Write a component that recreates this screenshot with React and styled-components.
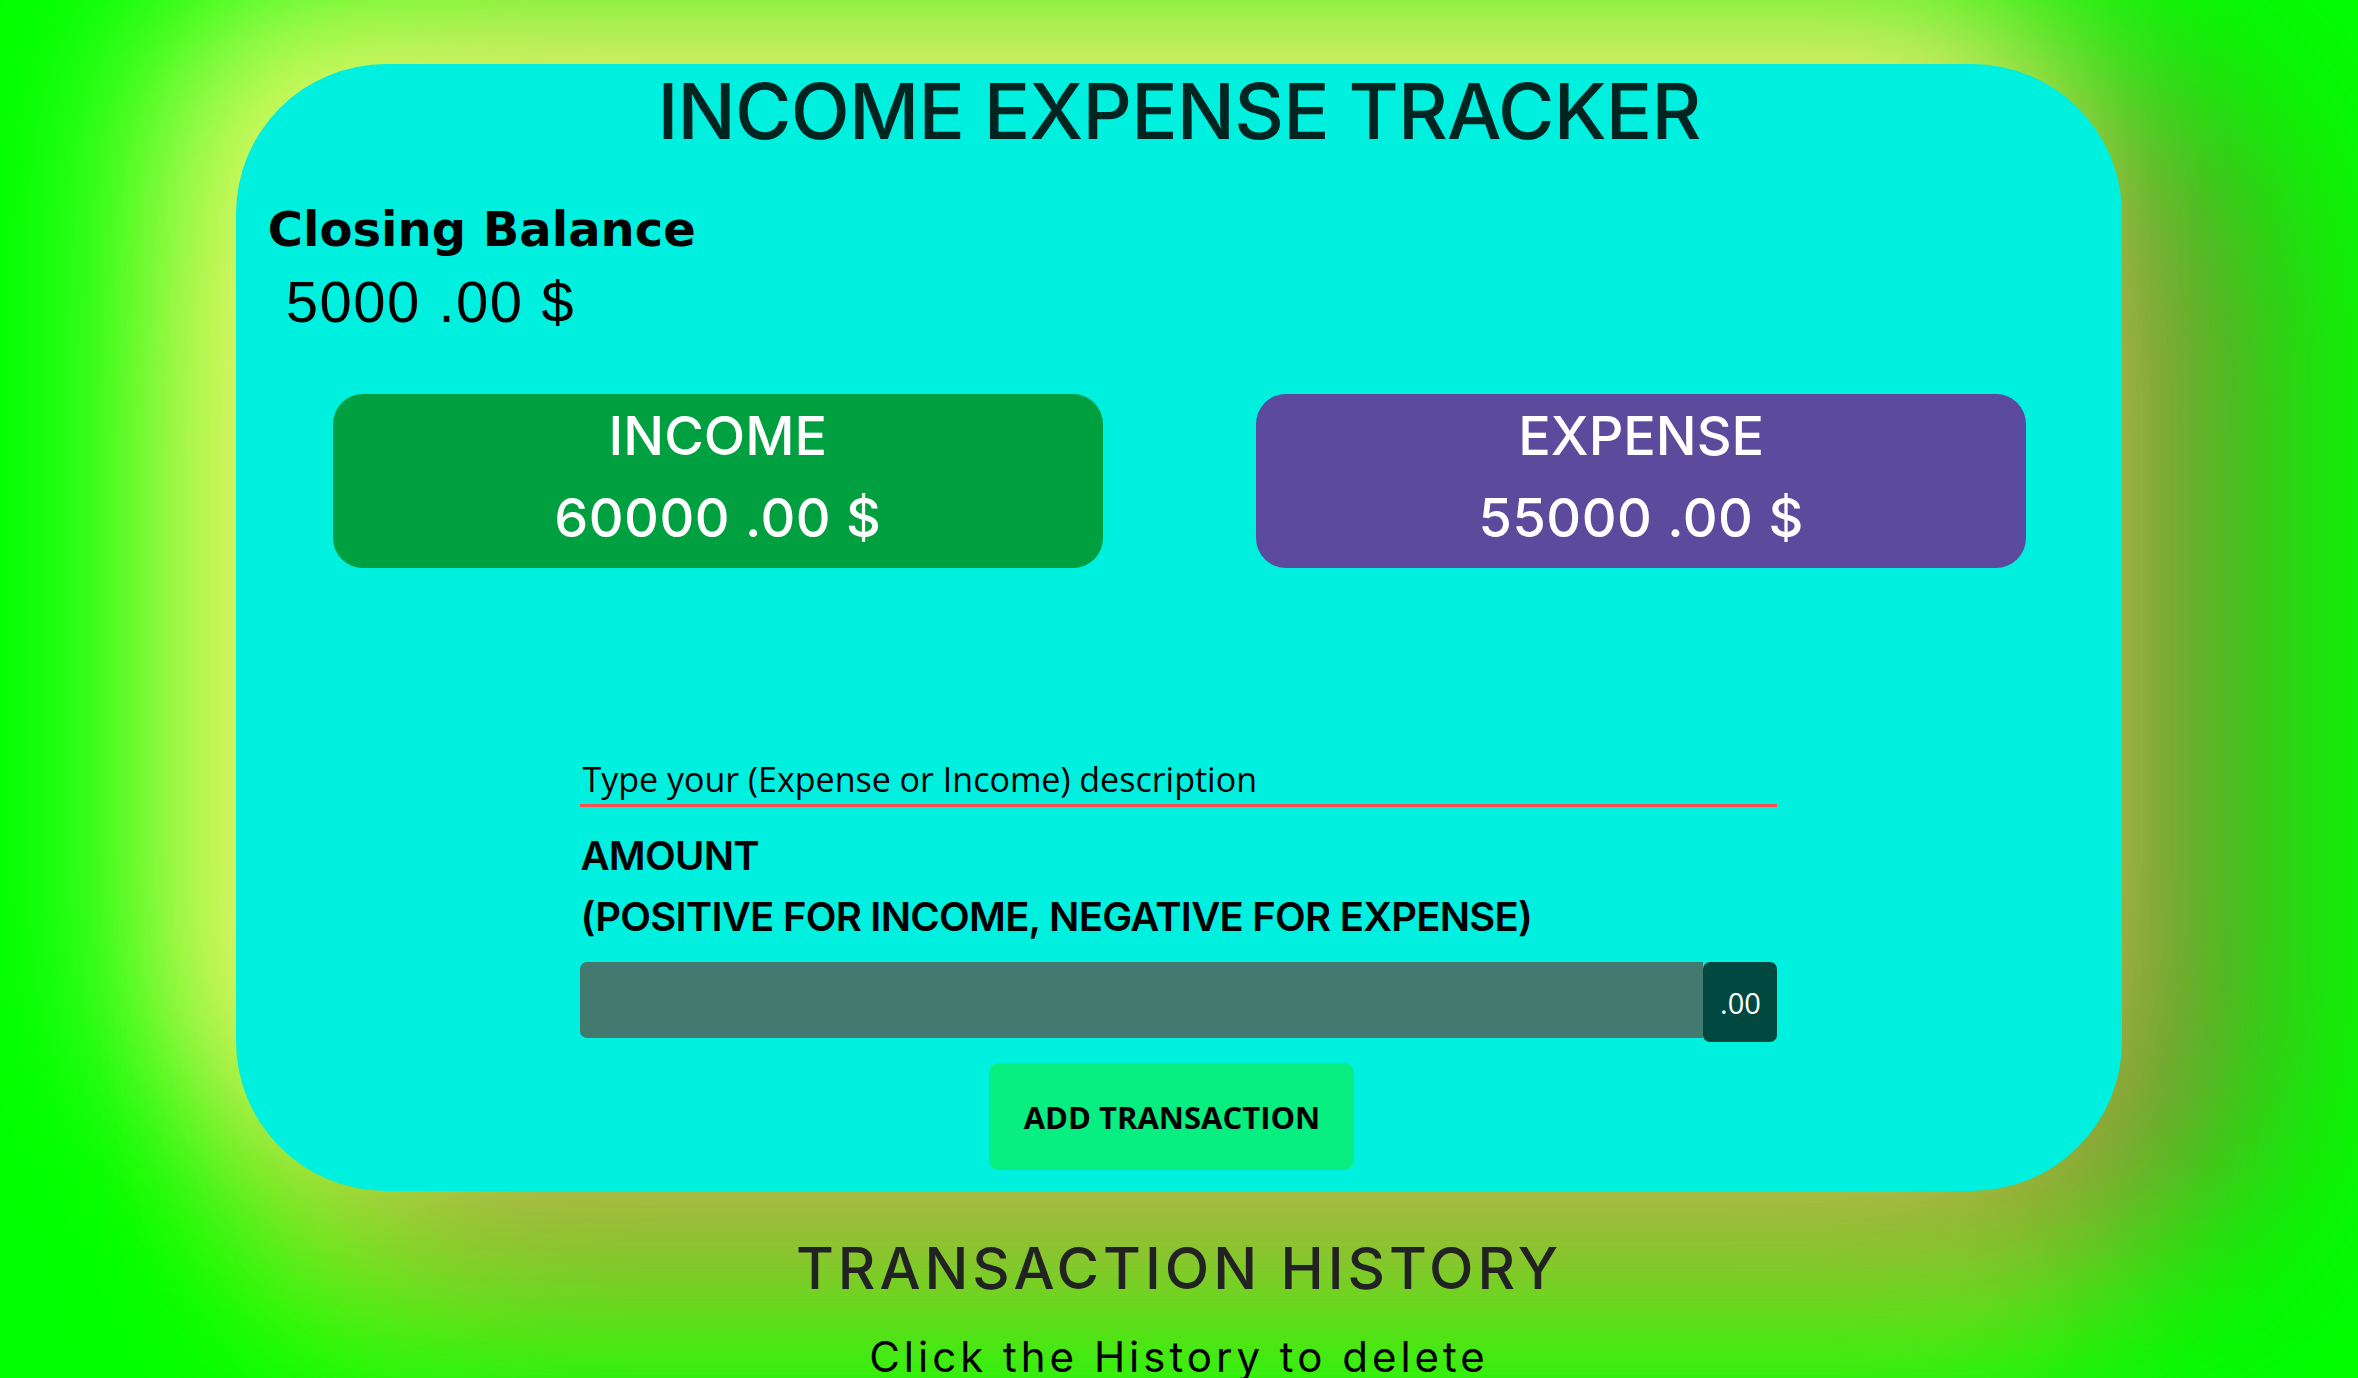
import React, { useState } from "react";
import styled, { createGlobalStyle } from "styled-components";

const GlobalStyle = createGlobalStyle`
  html, body {
    margin: 0;
    padding: 0;
  }
  body {
    background: #00ff00;
    font-family: "Inter", "Open Sans", sans-serif;
    overflow-x: hidden;
  }
`;

const Page = styled.div`
  padding-top: 64px;
  min-height: 100vh;
`;

const Card = styled.div`
  width: 80%;
  margin: 0 auto;
  background: #00f0e0;
  border-radius: 150px;
  padding-bottom: 21px;
  display: flex;
  flex-direction: column;
  box-shadow: -70px -70px 170px 20px rgba(255, 250, 120, 0.85),
    110px 40px 200px 30px rgba(150, 110, 70, 0.75),
    0px 140px 160px 10px rgba(190, 245, 40, 0.7);
`;

const Title = styled.h1`
  margin: 2px 0 0;
  text-align: center;
  font-family: "Inter", sans-serif;
  font-weight: 500;
  font-size: 77px;
  line-height: 90px;
  color: #002420;
  letter-spacing: -0.8px;
`;

const BalanceLabel = styled.h2`
  margin: 45px 0 0;
  padding-left: 32px;
  font-family: "DejaVu Sans", sans-serif;
  font-weight: 700;
  font-size: 48px;
  line-height: 56px;
  color: #000;
`;

const BalanceValue = styled.div`
  margin-top: 12px;
  padding-left: 50px;
  font-family: "Liberation Sans", Arial, sans-serif;
  font-size: 58px;
  line-height: 65px;
  letter-spacing: 1.5px;
  color: #000;
`;

const Totals = styled.div`
  display: flex;
  justify-content: space-between;
  padding: 0 96px 0 97px;
  margin-top: 60px;
`;

const TotalBox = styled.div`
  width: 770px;
  height: 174px;
  box-sizing: border-box;
  padding-top: 11px;
  border-radius: 30px;
  background: ${(p) => p.$bg};
  color: #fff;
  text-align: center;
  font-family: "Inter", sans-serif;
  font-weight: 500;
`;

const TotalLabel = styled.div`
  font-size: 54px;
  line-height: 62px;
`;

const TotalValue = styled.div`
  margin-top: 10px;
  font-size: 54px;
  line-height: 82px;
  letter-spacing: 0.5px;
`;

const Form = styled.form`
  width: 1197px;
  margin: 186px auto 0;
  display: flex;
  flex-direction: column;
`;

const DescInput = styled.input`
  height: 50px;
  box-sizing: content-box;
  padding: 0 2px;
  border: none;
  border-bottom: 3px solid #ff4f4f;
  background: transparent;
  outline: none;
  font-family: "Open Sans", sans-serif;
  font-size: 34px;
  color: #000;

  &::placeholder {
    color: #000;
  }
`;

const AmountLabel = styled.label`
  margin-top: 18px;
  font-family: "Inter", sans-serif;
  font-weight: 600;
  font-size: 40px;
  line-height: 61px;
  letter-spacing: -0.75px;
  color: #000;
`;

const AmountRow = styled.div`
  display: flex;
  align-items: flex-start;
  margin-top: 15px;
`;

const AmountInput = styled.input`
  flex: 1;
  height: 76px;
  box-sizing: border-box;
  border: none;
  border-radius: 7px 0 0 7px;
  background: #427a70;
  outline: none;
  padding: 0 20px;
  font-family: "Open Sans", sans-serif;
  font-size: 30px;
  color: #fff;
`;

const Suffix = styled.span`
  width: 74px;
  height: 80px;
  display: flex;
  align-items: center;
  justify-content: center;
  border-radius: 7px;
  background: #004840;
  color: #fff;
  font-family: "Open Sans", sans-serif;
  font-size: 29px;
`;

const AddButton = styled.button`
  align-self: center;
  margin: 21px 14px 0 0;
  width: 365px;
  height: 107px;
  border: none;
  border-radius: 10px;
  background: #08ee80;
  color: #000;
  font-family: "Open Sans", sans-serif;
  font-weight: 700;
  font-size: 31px;
  cursor: pointer;
`;

const HistoryTitle = styled.h3`
  margin: 42px 0 0;
  text-align: center;
  font-family: "Inter", sans-serif;
  font-weight: 500;
  font-size: 58px;
  line-height: 70px;
  letter-spacing: 4px;
  color: #222;
`;

const HistoryHint = styled.p`
  margin: 24px 0 0;
  text-align: center;
  font-family: "Inter", sans-serif;
  font-weight: 400;
  font-size: 42px;
  line-height: 60px;
  letter-spacing: 4px;
  color: #000;
`;

export default function App() {
  const [desc, setDesc] = useState("");
  const [amount, setAmount] = useState("");

  return (
    <Page>
      <GlobalStyle />
      <Card>
        <Title>INCOME EXPENSE TRACKER</Title>
        <BalanceLabel>Closing Balance</BalanceLabel>
        <BalanceValue>5000 .00 $</BalanceValue>
        <Totals>
          <TotalBox $bg="#00a040">
            <TotalLabel>INCOME</TotalLabel>
            <TotalValue>60000 .00 $</TotalValue>
          </TotalBox>
          <TotalBox $bg="#5c4a9c">
            <TotalLabel>EXPENSE</TotalLabel>
            <TotalValue>55000 .00 $</TotalValue>
          </TotalBox>
        </Totals>
        <Form onSubmit={(e) => e.preventDefault()}>
          <DescInput
            type="text"
            placeholder="Type your (Expense or Income) description"
            value={desc}
            onChange={(e) => setDesc(e.target.value)}
          />
          <AmountLabel>
            AMOUNT
            <br />
            (POSITIVE FOR INCOME, NEGATIVE FOR EXPENSE)
          </AmountLabel>
          <AmountRow>
            <AmountInput
              type="number"
              value={amount}
              onChange={(e) => setAmount(e.target.value)}
            />
            <Suffix>.00</Suffix>
          </AmountRow>
          <AddButton type="submit">ADD TRANSACTION</AddButton>
        </Form>
      </Card>
      <HistoryTitle>TRANSACTION HISTORY</HistoryTitle>
      <HistoryHint>Click the History to delete</HistoryHint>
    </Page>
  );
}
